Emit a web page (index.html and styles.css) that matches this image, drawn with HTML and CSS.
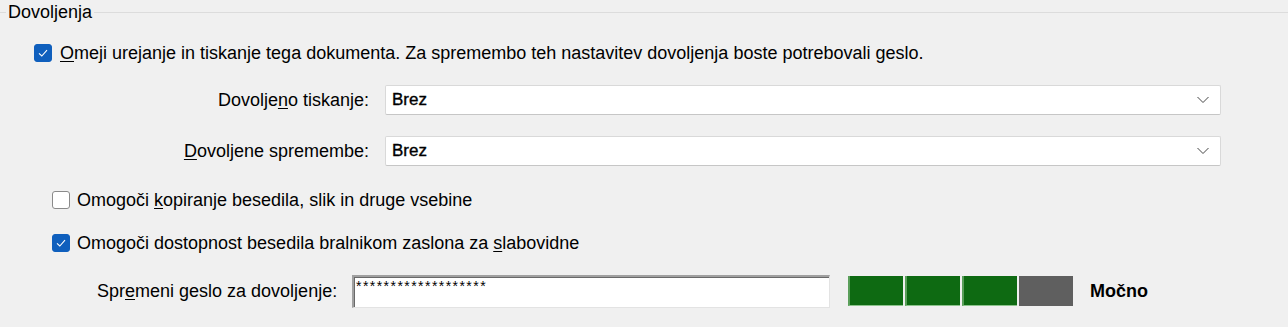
FILE: index.html
```html
<!DOCTYPE html>
<html lang="sl">
<head>
<meta charset="utf-8">
<title>Dovoljenja</title>
<link rel="stylesheet" href="styles.css">
</head>
<body>
<fieldset class="group">
  <legend class="legend">Dovoljenja</legend>

  <label class="check-row row-main">
    <span class="box checked"><svg viewBox="0 0 18 18" width="18" height="18"><path d="M5 9.3 L7.8 12 L13 6.2" fill="none" stroke="#fff" stroke-width="1.1"/></svg></span>
    <span class="check-text"><u>O</u>meji urejanje in tiskanje tega dokumenta. Za spremembo teh nastavitev dovoljenja boste potrebovali geslo.</span>
  </label>

  <div class="field-row row-print">
    <span class="field-label">Dovolje<u>n</u>o tiskanje:</span>
    <div class="select"><span class="select-value">Brez</span><svg class="chev" viewBox="0 0 12 8" width="12" height="8"><path d="M0.5 1 L6 6.5 L11.5 1" fill="none" stroke="#444" stroke-width="1"/></svg></div>
  </div>

  <div class="field-row row-change">
    <span class="field-label"><u>D</u>ovoljene spremembe:</span>
    <div class="select"><span class="select-value">Brez</span><svg class="chev" viewBox="0 0 12 8" width="12" height="8"><path d="M0.5 1 L6 6.5 L11.5 1" fill="none" stroke="#444" stroke-width="1"/></svg></div>
  </div>

  <label class="check-row row-copy">
    <span class="box"></span>
    <span class="check-text">Omogoči <u>k</u>opiranje besedila, slik in druge vsebine</span>
  </label>

  <label class="check-row row-access">
    <span class="box checked"><svg viewBox="0 0 18 18" width="18" height="18"><path d="M5 9.3 L7.8 12 L13 6.2" fill="none" stroke="#fff" stroke-width="1.1"/></svg></span>
    <span class="check-text">Omogoči dostopnost besedila bralnikom zaslona za <u>s</u>labovidne</span>
  </label>

  <div class="pass-row">
    <span class="pass-label">Spr<u>e</u>meni geslo za dovoljenje:</span>
    <div class="pass-input">*******************</div>
    <div class="meter">
      <span class="seg on"></span><span class="seg on"></span><span class="seg on"></span><span class="seg off"></span>
    </div>
    <span class="strength">Močno</span>
  </div>
</fieldset>
</body>
</html>
```

FILE: styles.css
```css
html, body {
  margin: 0;
  padding: 0;
  background: #f0f0f0;
  width: 1288px;
  height: 327px;
  overflow: hidden;
}
body {
  font-family: "Liberation Sans", Arial, sans-serif;
  font-size: 18px;
  color: #000;
}
u { text-decoration-thickness: 1px; text-underline-offset: 2px; }

.group {
  margin: 2px 0 0 0;
  padding: 0;
  border: 0;
  border-top: 1px solid #dcdcdc;
  min-width: 0;
}
.legend {
  margin-left: 6px;
  padding: 0 2px;
  font-size: 18px;
  line-height: 20px;
}

.check-row {
  display: flex;
  align-items: center;
  gap: 8px;
  height: 18px;
}
.row-main { margin: 22px 0 0 34px; }
.row-copy { margin: 25px 0 0 52px; gap: 7px; }
.row-access { margin: 25px 0 0 52px; gap: 7px; }

.check-text { font-size: 18px; line-height: 20px; white-space: nowrap; }

.box {
  width: 18px;
  height: 18px;
  box-sizing: border-box;
  border-radius: 3px;
  border: 1px solid #8a8a8a;
  background: #fff;
  flex: none;
  display: block;
}
.box.checked {
  background: #0f5fbd;
  border-color: #0f5fbd;
}
.box svg { display: block; margin: -1px; }

.field-row {
  display: flex;
  align-items: center;
  height: 30px;
}
.row-print { margin-top: 23px; }
.row-change { margin-top: 21px; }
.field-label {
  width: 369px;
  text-align: right;
  font-size: 18px;
  line-height: 20px;
  flex: none;
}
.select {
  margin-left: 16px;
  width: 836px;
  height: 30px;
  box-sizing: border-box;
  background: #fff;
  border: 1px solid #d9d9d9;
  border-bottom-color: #c6c6c6;
  border-radius: 2px;
  display: flex;
  align-items: center;
  padding: 0 11px 0 6px;
}
.select-value {
  flex: 1;
  font-size: 17px;
  -webkit-text-stroke: 0.35px #000;
}
.chev { display: block; }

.pass-row {
  display: flex;
  align-items: center;
  margin-top: 22px;
  height: 34px;
}
.pass-label {
  margin-left: 97px;
  width: 255px;
  font-size: 18px;
  line-height: 20px;
  flex: none;
  white-space: nowrap;
}
.pass-input {
  width: 478px;
  height: 33px;
  box-sizing: border-box;
  background: #fff;
  border-top: 2px solid #a0a0a0;
  border-left: 2px solid #a0a0a0;
  border-right: 1px solid #e3e3e3;
  border-bottom: 1px solid #e3e3e3;
  box-shadow: inset 1px 1px 0 #696969;
  padding: 2px 0 0 2px;
  font-size: 14px;
  line-height: 14px;
  letter-spacing: 1.45px;
  color: #000;
  flex: none;
}
.meter {
  margin-left: 18px;
  display: flex;
  gap: 2px;
  height: 30px;
}
.seg {
  display: block;
  width: 55px;
  height: 30px;
  box-sizing: border-box;
}
.seg.on {
  background: #0e6a12;
  border-left: 2px solid #5a9f5a;
  border-bottom: 1px solid #8cc48c;
}
.seg.off { background: #5f5f5f; width: 54px; }
.strength {
  margin-left: 17px;
  font-weight: bold;
  font-size: 18px;
}
```
